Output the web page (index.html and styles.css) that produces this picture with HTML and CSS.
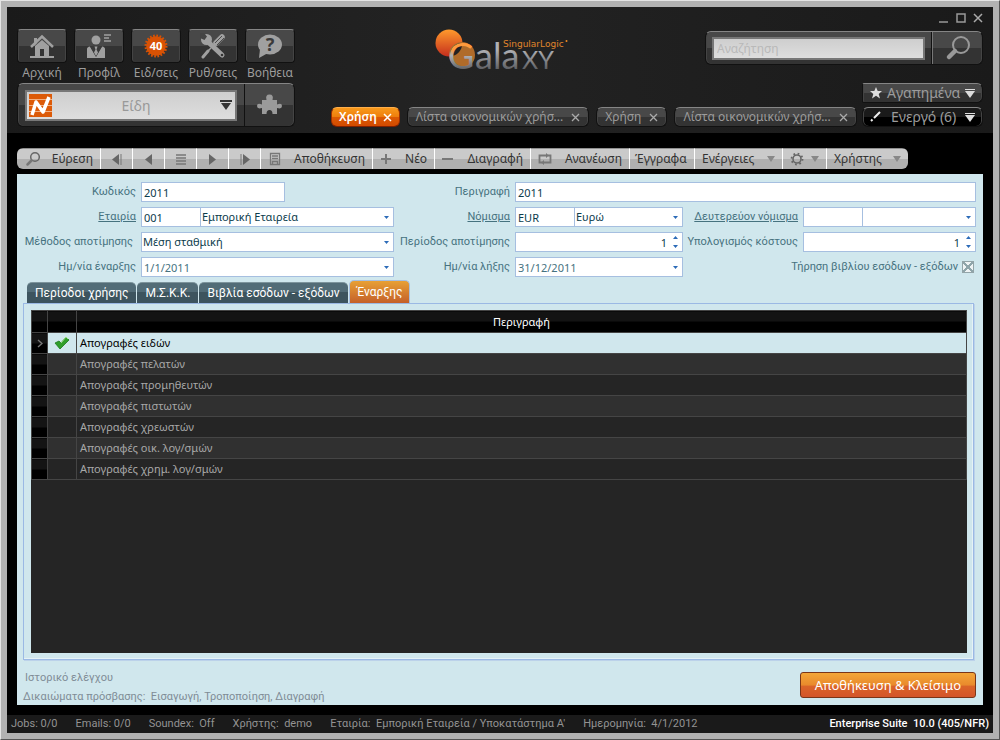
FILE: index.html
```html
<!DOCTYPE html>
<html lang="el">
<head>
<meta charset="utf-8">
<title>Galaxy</title>
<link rel="stylesheet" href="styles.css">
</head>
<body>
<div class="window">
  <header class="top">
    <div class="left">
      <nav class="nav">
        <button class="nav-item"><span class="tile"><svg width="26" height="26" viewBox="0 0 26 26"><path d="M6 13v10h14V13L13 7z" fill="#a0a0a0"/><path d="M2 14 13 3.500l11 10.500" fill="none" stroke="#a0a0a0" stroke-width="2.500"/><path d="M5 5h3v5l-3 3z" fill="#a0a0a0"/><path d="M11 16h4v7h-4z" fill="#333"/><path d="M1 23h24v2H1z" fill="#a0a0a0"/></svg></span>Αρχική</button>
        <button class="nav-item"><span class="tile"><svg width="26" height="26" viewBox="0 0 26 26"><circle cx="10" cy="7" r="4.500" fill="#a0a0a0"/><path d="M1 25V16q0-2 3-2.500l6 10 6-10q3 .5 3 2.500v9z" fill="#a0a0a0"/><path d="m4 13.500 6 10.500 6-10.500-4-1H8z" fill="#3a3a3a"/><path d="M8.500 13.500h3l-1 3 1.500 3-2 3.500-2-3.500 1.500-3z" fill="#a0a0a0"/><path d="M18 2h7M18 5h5M18 8h7" stroke="#a0a0a0" stroke-width="1.500"/></svg></span>Προφίλ</button>
        <button class="nav-item"><span class="tile"><svg width="26" height="26" viewBox="0 0 26 26"><circle cx="13" cy="13" r="9.800" fill="#d95204"/><circle cx="13" cy="13" r="10.300" fill="none" stroke="#d95204" stroke-width="2.400" stroke-dasharray="1.700 1.536"/><text x="13" y="17" text-anchor="middle" class="count">40</text></svg></span>Ειδ/σεις</button>
        <button class="nav-item"><span class="tile"><svg width="26" height="26" viewBox="0 0 26 26"><path d="M6 7 22 22" stroke="#a0a0a0" stroke-width="5" stroke-linecap="round"/><circle cx="6.500" cy="6.500" r="5.500" fill="#a0a0a0"/><path d="M0 0h4l3 3.500L4.500 7 0 5z" fill="#444"/><circle cx="22" cy="22" r="1.300" fill="#333"/><path d="m16 10 6-6" stroke="#a0a0a0" stroke-width="5.500" stroke-linecap="round"/><path d="m15 10 7-7m-5 9 7-7" stroke="#4a4a4a"/><path d="m3 24 5-6" stroke="#a0a0a0" stroke-width="3" stroke-linecap="round"/><path d="m7 19 4-4" stroke="#a0a0a0" stroke-width="1.500"/></svg></span>Ρυθ/σεις</button>
        <button class="nav-item"><span class="tile"><svg width="26" height="26" viewBox="0 0 26 26"><ellipse cx="13" cy="11.500" rx="12" ry="10" fill="#a0a0a0"/><path d="M3 16 2 25l9-5z" fill="#a0a0a0"/><text x="13" y="18" text-anchor="middle" class="mark">?</text></svg></span>Βοήθεια</button>
      </nav>
      <div class="launcher">
        <div class="launcher-main">
          <button class="module">
            <svg width="23" height="23" viewBox="0 0 23 23"><path d="M0 0h23v23H0z" fill="#dc5a08"/><path d="M0 5.500h23M0 11.500h23M0 17.500h23" stroke="#f3b183"/><path d="m3 21 4-13 7 10 6-15" fill="none" stroke="#fff" stroke-width="3.500" stroke-linejoin="round"/></svg>
            <span class="module-name">Είδη</span>
            <svg width="12" height="11" viewBox="0 0 12 11"><path d="M0 1h12" stroke="#333" stroke-width="2"/><path d="M1 3h10L6 10z" fill="#333"/></svg>
          </button>
        </div>
        <button class="addon" aria-label="Πρόσθετα"><svg width="26" height="22" viewBox="0 0 26 22"><path d="M5 6h4.500Q8 .5 12.500.5T15.500 6H20v4.500q5-2 5 1.500t-5 2V20h-4.500q0-4-3-4t-3 4H5v-6q-5 1.500-5-2t5-1.500z" fill="#9a9a9a"/></svg></button>
      </div>
    </div>
    <div class="right">
      <div class="brand-row">
        <svg class="logo" width="134" height="48" viewBox="0 0 134 48" role="img" aria-label="SingularLogic Galaxy">
          <defs>
            <linearGradient id="sun" x2="0" y2="1"><stop offset="0" stop-color="#ff9a2c"/><stop offset="1" stop-color="#c52e1d"/></linearGradient>
            <linearGradient id="steel" gradientUnits="userSpaceOnUse" x1="0" y1="12" x2="0" y2="41"><stop offset=".3" stop-color="#b0b1b5"/><stop offset="1" stop-color="#5c5d61"/></linearGradient>
            <linearGradient id="ring" gradientUnits="userSpaceOnUse" x1="0" y1="12" x2="0" y2="41"><stop offset=".3" stop-color="#ff9a3c"/><stop offset=".5" stop-color="#b0b1b5"/><stop offset="1" stop-color="#5c5d61"/></linearGradient>
          </defs>
          <circle cx="14" cy="14" r="13.500" fill="url(#sun)"/>
          <circle cx="27" cy="26" r="13" fill="#b06b2a"/>
          <path d="M15 27A12 12 0 0 0 27 14 12 12 0 0 0 15 27z" fill="#222"/>
          <text x="13" y="40" class="wordmark" fill="url(#ring)">G</text>
          <text x="40" y="40" class="wordmark" fill="url(#steel)">ala</text>
          <text x="87" y="40" class="wordmark small" fill="url(#steel)">XY</text>
          <text x="68" y="18" class="vendor">SingularLogic</text>
          <circle cx="131.500" cy="12" r="1" fill="#f28a20"/>
        </svg>
        <div class="search-col">
          <div class="controls">
            <button aria-label="Ελαχιστοποίηση"><svg width="10" height="10"><path d="M0 9h9" stroke="#999" stroke-width="1.500"/></svg></button>
            <button aria-label="Μεγιστοποίηση"><svg width="10" height="10"><path d="M1 1h8v8H1z" fill="none" stroke="#999" stroke-width="1.500"/></svg></button>
            <button aria-label="Κλείσιμο"><svg width="10" height="10"><path d="m1 1 8 8M9 1 1 9" stroke="#aaa" stroke-width="1.500"/></svg></button>
          </div>
          <div class="search">
            <div class="search-main"><input type="text" placeholder="Αναζήτηση" aria-label="Αναζήτηση"></div>
            <button class="search-go" aria-label="Εύρεση"><svg width="26" height="26" viewBox="0 0 26 26"><circle cx="16" cy="10" r="8" fill="none" stroke="#999" stroke-width="2"/><path d="m10 16-6 6" stroke="#999" stroke-width="4.500" stroke-linecap="round"/></svg></button>
          </div>
        </div>
      </div>
      <div class="tabs-row">
        <div class="doc-tabs">
          <button class="doc active">Χρήση<svg width="9" height="9"><path d="m1 1 7 7M8 1 1 8" stroke="#fff" stroke-width="1.500"/></svg></button>
          <button class="doc">Λίστα οικονομικών χρήσ...<svg width="9" height="9"><path d="m1 1 7 7M8 1 1 8" stroke="#aaa" stroke-width="1.300"/></svg></button>
          <button class="doc">Χρήση<svg width="9" height="9"><path d="m1 1 7 7M8 1 1 8" stroke="#aaa" stroke-width="1.300"/></svg></button>
          <button class="doc">Λίστα οικονομικών χρήσ...<svg width="9" height="9"><path d="m1 1 7 7M8 1 1 8" stroke="#aaa" stroke-width="1.300"/></svg></button>
        </div>
        <div class="menus">
          <button class="menu"><svg width="12" height="12" viewBox="0 0 12 12"><path d="m6 0 1.700 4H12L8.700 6.900 10 11.500 6 8.800 2 11.500l1.300-4.600L0 4h4.300z" fill="#ddd"/></svg><span>Αγαπημένα</span><svg width="10" height="9"><path d="M0 .5h10" stroke="#ddd"/><path d="M0 2h10L5 9z" fill="#ddd"/></svg></button>
          <button class="menu dark"><svg width="12" height="12" viewBox="0 0 12 12"><path d="M10 1 4 7M1 10l1.500-1.500" stroke="#eee" stroke-width="2"/></svg><span>Ενεργό (6)</span><svg width="10" height="9"><path d="M0 .5h10" stroke="#ddd"/><path d="M0 2h10L5 9z" fill="#ddd"/></svg></button>
        </div>
      </div>
    </div>
  </header>

  <main class="body">
    <div class="toolbar">
      <button class="tool"><svg width="16" height="16" viewBox="0 0 16 16"><circle cx="11" cy="6" r="4.300" fill="none" stroke="#666" stroke-width="1.500"/><path d="m7.500 9.500-4 4" stroke="#777" stroke-width="2.500" stroke-linecap="round"/></svg>Εύρεση</button>
      <button class="tool" aria-label="Πρώτο"><svg width="10" height="11"><path d="M7 0v11L0 5.500z" fill="#666"/><path d="M9 0v11" stroke="#777"/></svg></button>
      <button class="tool" aria-label="Προηγούμενο"><svg width="8" height="11"><path d="M7 0v11L0 5.500z" fill="#666"/></svg></button>
      <button class="tool" aria-label="Λίστα"><svg width="10" height="11"><path d="M0 1h10M0 4h10M0 7h10M0 10h10" stroke="#777" stroke-width="1.500"/></svg></button>
      <button class="tool" aria-label="Επόμενο"><svg width="8" height="11"><path d="M0 0v11l7-5.500z" fill="#666"/></svg></button>
      <button class="tool" aria-label="Τελευταίο"><svg width="10" height="11"><path d="M3 0v11l7-5.500z" fill="#666"/><path d="M1 0v11" stroke="#777"/></svg></button>
      <button class="tool"><svg width="14" height="14" viewBox="0 0 14 14"><path d="M2.500 1.500h9v11h-9zM4 4h6M4 6.500h6M4.500 12.500v-3h5v3" fill="none" stroke="#777" stroke-width="1.300"/></svg>Αποθήκευση</button>
      <button class="tool"><svg width="12" height="12"><path d="M6 1v10M1 6h10" stroke="#777" stroke-width="2"/></svg>Νέο</button>
      <button class="tool"><svg width="12" height="12"><path d="M0 6h11" stroke="#777" stroke-width="2"/></svg>Διαγραφή</button>
      <button class="tool"><svg width="14" height="12" viewBox="0 0 14 12"><path d="M4 9.500H1.500V2.500H9M10 2.500h2.500v7H5" fill="none" stroke="#777" stroke-width="1.800"/><path d="m8 0 3 2.500L8 5zM6 7 3 9.500 6 12z" fill="#777"/></svg>Ανανέωση</button>
      <button class="tool snug">Έγγραφα</button>
      <button class="tool">Ενέργειες<svg width="8" height="6"><path d="M0 0h8L4 6z" fill="#888"/></svg></button>
      <button class="tool snug" aria-label="Ρυθμίσεις"><svg width="14" height="14" viewBox="0 0 14 14"><circle cx="7" cy="7" r="4" fill="none" stroke="#666" stroke-width="1.600"/><circle cx="7" cy="7" r="5.500" fill="none" stroke="#666" stroke-width="1.800" stroke-dasharray="1.700 2.620"/></svg><svg width="8" height="6"><path d="M0 0h8L4 6z" fill="#888"/></svg></button>
      <button class="tool">Χρήστης<svg width="8" height="6"><path d="M0 0h8L4 6z" fill="#888"/></svg></button>
    </div>

    <section class="sheet">
      <form class="form">
        <label for="code">Κωδικός</label>
        <div class="field short"><input id="code" type="text" value="2011"></div>
        <label for="desc">Περιγραφή</label>
        <div class="field wide"><input id="desc" type="text" value="2011"></div>

        <label for="company"><a href="#company">Εταιρία</a></label>
        <div class="field"><input id="company" class="key" type="text" value="001"><select aria-label="Εταιρία"><option>Εμπορική Εταιρεία</option></select><svg class="arrow" width="5" height="3"><path d="M0 0h5L2.500 3z"/></svg></div>
        <label for="currency"><a href="#currency">Νόμισμα</a></label>
        <div class="field"><input id="currency" class="key" type="text" value="EUR"><select aria-label="Νόμισμα"><option>Ευρώ</option></select><svg class="arrow" width="5" height="3"><path d="M0 0h5L2.500 3z"/></svg></div>
        <label for="second"><a href="#second">Δευτερεύον νόμισμα</a></label>
        <div class="field"><input id="second" class="key" type="text" value=""><select aria-label="Δευτερεύον νόμισμα"><option></option></select><svg class="arrow" width="5" height="3"><path d="M0 0h5L2.500 3z"/></svg></div>

        <label class="gap" for="method">Μέθοδος αποτίμησης</label>
        <div class="field"><select id="method"><option>Μέση σταθμική</option></select><svg class="arrow" width="5" height="3"><path d="M0 0h5L2.500 3z"/></svg></div>
        <label for="period">Περίοδος αποτίμησης</label>
        <div class="field"><input id="period" class="num" type="text" value="1"><svg class="arrow" width="5" height="12"><path d="M0 3h5L2.500 0zM0 9h5l-2.500 3z"/></svg></div>
        <label for="cost">Υπολογισμός κόστους</label>
        <div class="field"><input id="cost" class="num" type="text" value="1"><svg class="arrow" width="5" height="12"><path d="M0 3h5L2.500 0zM0 9h5l-2.500 3z"/></svg></div>

        <label for="from">Ημ/νία έναρξης</label>
        <div class="field muted"><input id="from" type="text" value="1/1/2011"><svg class="arrow" width="5" height="3"><path d="M0 0h5L2.500 3z"/></svg></div>
        <label for="to">Ημ/νία λήξης</label>
        <div class="field muted"><input id="to" type="text" value="31/12/2011"><svg class="arrow" width="5" height="3"><path d="M0 0h5L2.500 3z"/></svg></div>
        <label class="check">Τήρηση βιβλίου εσόδων - εξόδων<input type="checkbox" checked></label>
      </form>

      <div class="page-tabs">
        <button class="page-tab">Περίοδοι χρήσης</button>
        <button class="page-tab">Μ.Σ.Κ.Κ.</button>
        <button class="page-tab">Βιβλία εσόδων - εξόδων</button>
        <button class="page-tab current">Έναρξης</button>
      </div>
      <div class="panel">
        <div class="grid-area">
          <table class="grid">
            <thead><tr><th class="c-mark"></th><th class="c-tick"></th><th>Περιγραφή</th></tr></thead>
            <tbody>
              <tr class="selected"><td class="c-mark"><svg width="6" height="9"><path d="m1 1 4 3.500L1 8" fill="none" stroke="#777" stroke-width="1.500"/></svg></td><td class="c-tick"><svg width="16" height="14" viewBox="0 0 16 14"><path d="m1 7 4-2 2 2 5-6 3 3-9 9z" fill="#2f9e2a" stroke="#1c7a1c" stroke-width=".8"/><path d="m7 7 5-6 2 2" fill="none" stroke="#9fe08a"/></svg></td><td>Απογραφές ειδών</td></tr>
              <tr><td class="c-mark"></td><td></td><td>Απογραφές πελατών</td></tr>
              <tr><td class="c-mark"></td><td></td><td>Απογραφές προμηθευτών</td></tr>
              <tr><td class="c-mark"></td><td></td><td>Απογραφές πιστωτών</td></tr>
              <tr><td class="c-mark"></td><td></td><td>Απογραφές χρεωστών</td></tr>
              <tr><td class="c-mark"></td><td></td><td>Απογραφές οικ. λογ/σμών</td></tr>
              <tr><td class="c-mark"></td><td></td><td>Απογραφές χρημ. λογ/σμών</td></tr>
            </tbody>
          </table>
        </div>
      </div>

      <div class="sheet-foot">
        <div class="notes">
          <p class="history">Ιστορικό ελέγχου</p>
          <p>Δικαιώματα πρόσβασης:&nbsp; Εισαγωγή, Τροποποίηση, Διαγραφή</p>
        </div>
        <button class="save">Αποθήκευση &amp; Κλείσιμο</button>
      </div>
    </section>
  </main>

  <footer class="status">
    <span>Jobs: 0/0</span><span>Emails: 0/0</span><span>Soundex:&nbsp; Off</span><span>Χρήστης:&nbsp; demo</span><span>Εταιρία:&nbsp; Εμπορική Εταιρεία / Υποκατάστημα Α'</span><span>Ημερομηνία:&nbsp; 4/1/2012</span>
    <strong>Enterprise Suite&nbsp; 10.0 (405/NFR)</strong>
  </footer>
</div>
</body>
</html>
```

FILE: styles.css
```css
* { box-sizing: border-box; }
body { margin: 0; font: 11px/16px "Noto Sans", "Open Sans", sans-serif; }
button, input, select { font: inherit; color: inherit; }
button { border: 0; padding: 0; background: none; white-space: nowrap; cursor: pointer; }
svg { flex: none; }

.window {
  display: flex; flex-direction: column; min-height: 100vh;
  border: 1px solid #e4e4e4; border-right-color: #555; border-bottom-color: #555;
  background: #000; padding: 6px; box-shadow: inset 0 0 0 6px #b2b2b2;
}

/* header */
.top { display: flex; gap: 36px; padding: 0 10px 6px; background: #1c1c1c linear-gradient(90deg, #1a1a1a, #232323 45%, #1a1a1a); color: #9c9c9c; font-size: 12px; }
.left { width: 278px; padding-top: 22px; flex: none; }
.nav { display: flex; gap: 7px; }
.nav-item { width: 50px; display: flex; flex-direction: column; align-items: center; line-height: 19px; }
.tile, .launcher, .search, .doc, .menu { border: 1px solid #111; border-top-color: #858585; background: linear-gradient(#484848 50%, #333 50%); box-shadow: inset 1px 0 #444, inset -1px 0 #444; }
.tile { width: 50px; height: 34px; border-radius: 4px; display: flex; align-items: center; justify-content: center; }
.count { font: bold 11px "Noto Sans", sans-serif; fill: #fff; }
.mark { font: bold 18px "Noto Sans", sans-serif; fill: #3a3a3a; }
.launcher { display: flex; height: 44px; margin-top: 1px; border-radius: 6px; }
.launcher-main { flex: 1; padding: 6px 7px; border-right: 1px solid #111; }
.module { display: flex; align-items: center; width: 100%; height: 31px; padding: 0 3px 0 2px; border: 2px solid #777; background: linear-gradient(#cecece, #dedede); font-size: 14px; color: #999; }
.module-name { flex: 1; }
.addon { width: 49px; display: flex; align-items: center; justify-content: center; }

.right { flex: 1; display: flex; flex-direction: column; min-width: 0; }
.brand-row { display: flex; justify-content: space-between; height: 76px; padding-left: 104px; }
.logo { margin-top: 22px; }
.wordmark { font: 36px Lato, sans-serif; }
.wordmark.small { font-size: 25px; }
.vendor { font: 9px "DejaVu Sans", sans-serif; fill: #e0862c; }
.controls { display: flex; justify-content: flex-end; gap: 7px; height: 24px; padding-top: 6px; }
.controls button { height: 10px; width: 10px; display: flex; }
.search { display: flex; width: 278px; height: 34px; border-radius: 6px; }
.search-main { flex: 1; padding: 5px 6px; border-right: 1px solid #111; }
.search input { display: block; width: 100%; height: 23px; padding: 0 3px; border: 2px solid #777; background: linear-gradient(#cecece, #dedede); }
.search input::placeholder { color: #b9b9b9; opacity: 1; }
.search-go { width: 50px; display: flex; align-items: center; justify-content: center; border-left: 1px solid #777; }
.tabs-row { display: flex; align-items: flex-end; justify-content: space-between; gap: 7px; }
.doc-tabs { display: flex; gap: 7px; min-width: 0; }
.doc { display: flex; align-items: center; gap: 8px; height: 20px; padding: 0 8px; border-radius: 6px; }
.doc.active { gap: 6px; padding: 0 7px; color: #fff; font-weight: 600; border-color: #ffae4a #a03000 #802000; background: linear-gradient(#f89a1c, #ee7d0c 50%, #dc5a04 50%, #d24a00); box-shadow: none; }
.menus { display: flex; flex-direction: column; gap: 4px; width: 121px; }
.menu { display: flex; align-items: center; justify-content: space-between; height: 20px; padding: 0 7px; border-radius: 2px 6px 6px 2px; font-size: 14px; }
.menu.dark { border-radius: 6px; background: linear-gradient(#1a1a1a 50%, #000 50%); }

/* body */
.body { flex: 1; display: flex; flex-direction: column; padding: 15px 10px 10px; gap: 5px; background: #000; }
.toolbar { display: grid; grid-template-columns: 84px repeat(5, 32px) 112px 62px 96px 99px 65px 88px 44px 81px; align-self: flex-start; height: 21px; border-radius: 6px; overflow: hidden; font-size: 12px; color: #333; }
.tool { display: flex; align-items: center; justify-content: space-between; padding: 0 7px; border-right: 1px solid #fff; border-top: 1px solid #8e8e8e; background: linear-gradient(#cacaca 50%, #b0b0b0 50%); }
.tool[aria-label] { justify-content: center; gap: 7px; }
.tool.snug { padding: 0 5px; }
.tool:last-child { border-right: 0; }

.sheet { flex: 1; display: flex; flex-direction: column; padding: 8px 7px 0 6px; background: #d0e7ed; }
.form { display: grid; grid-template-columns: 118px minmax(0, 253fr) 121px minmax(0, 168fr) 120px minmax(0, 173fr); grid-auto-rows: 20px; row-gap: 5px; color: #46727f; }
.form label { align-self: center; padding-right: 5px; text-align: right; white-space: nowrap; font-family: Roboto, "Noto Sans", sans-serif; }
.form label.gap { padding-right: 8px; }
.form a { color: inherit; }
.form .check { grid-column: 5 / 7; display: flex; align-items: center; justify-content: flex-end; gap: 4px; padding-right: 2px; }
.check input { appearance: none; width: 12px; height: 12px; margin: 0; border: 1px solid #93a4a8; background: linear-gradient(45deg, transparent 43%, #8fa5aa 43% 57%, transparent 57%), linear-gradient(-45deg, #eef3f4 43%, #8fa5aa 43% 57%, #eef3f4 57%); }
.field { display: flex; align-items: center; height: 20px; border: 1px solid #a6bfe0; background: #fff; color: #0c3c4c; padding-right: 4px; }
.field.short { width: 57%; }
.field.wide { grid-column: 4 / 7; }
.field.muted { color: #46727f; }
.field input, .field select { flex: 1; min-width: 0; height: 18px; padding: 0 2px; border: 0; background: none; appearance: none; outline: 0; }
.field select { padding: 0 1px; }
.field .key { flex: 0 0 59px; border-right: 1px solid #a6bfe0; }
.field .num { text-align: right; padding-right: 6px; }
.arrow { fill: #2c6bb8; }

.page-tabs { display: flex; align-items: flex-end; gap: 1px; height: 26px; padding-left: 4px; font: 12px Roboto, "Noto Sans", sans-serif; }
.page-tab { height: 21px; padding: 0 8px; color: #fff; border-radius: 5px 5px 0 0; border-top: 1px solid #7d949c; background: linear-gradient(#526c77 45%, #3d545e 45%); }
.page-tab.current { height: 23px; padding: 0 7px; border: 1px solid #a6bfe0; border-bottom: 0; background: linear-gradient(#e8a035, #c4602a); }
.panel { flex: 1; display: flex; padding: 6px 6px 6px 7px; margin-right: 2px; border: 1px solid #9bb9e4; box-shadow: inset -1px -1px #e6f2f6, 1px 1px #bcd2ea; }
.grid-area { flex: 1; background: #252525; }
.grid { width: 100%; table-layout: fixed; border-collapse: collapse; color: #a8a8a8; }
.grid th { height: 22px; padding: 0; font-weight: normal; color: #fff; background: linear-gradient(#131313 50%, #000 50%); border: 1px solid #444; }
.grid td { height: 21px; padding: 0 3px; border: 1px solid #454545; line-height: 16px; }
.grid .c-mark { width: 16px; padding: 0; text-align: center; background: linear-gradient(#141414 50%, #000 50%); }
.grid .c-tick { width: 29px; padding: 0; text-align: center; }
.grid svg { display: block; margin: auto; }
.grid tbody tr:nth-child(even) { background: #303030; }
.grid .selected { background: #d0e7ed; color: #000; }

.sheet-foot { display: flex; justify-content: space-between; align-items: flex-start; padding-top: 10px; color: #7f8c96; }
.notes { display: grid; gap: 3px; font-family: Roboto, "Noto Sans", sans-serif; }
.notes p { margin: 0; }
.notes .history { padding-left: 2px; }
.save { height: 26px; margin-top: 2px; padding: 0 14px; border: 1px solid #7a3518; border-radius: 3px; color: #fff; font-size: 13px; background: linear-gradient(#f3a638, #e98a2c 50%, #da6428 55%, #d4552a); }

.status { display: flex; align-items: center; gap: 18px; height: 18px; padding: 0 4px; background: #1a1a1a; color: #939393; white-space: nowrap; font-family: Roboto, "Noto Sans", sans-serif; }
.status strong { margin-left: auto; color: #fff; font-weight: 500; }
```
